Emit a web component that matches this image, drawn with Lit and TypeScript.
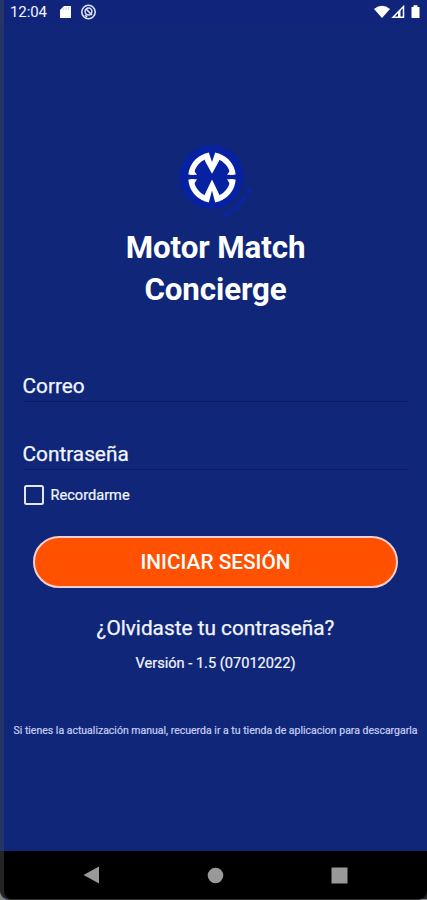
import { LitElement, html, css } from "lit";
import { customElement } from "lit/decorators.js";

@customElement("app-root")
export class AppRoot extends LitElement {
  static styles = css`
    :host { display: block; width: 427px; height: 900px; overflow: hidden; background: #858789;
      font-family: Roboto, "Liberation Sans", sans-serif; color: #f3f5ff; }
    * { box-sizing: border-box; }
    .phone { height: 900px; display: flex; flex-direction: column; background: #102779;
      border-left: 4px solid #253569; border-bottom: 1px solid #333; border-radius: 0 0 9px 9px;
      white-space: nowrap; }
    .status { height: 24px; display: flex; align-items: center; padding: 0 5px 0 6px; background: #10247c; flex: none; }
    .clock { font-size: 15px; letter-spacing: -0.1px; width: 48px; line-height: 24px; }
    .grow { flex: 1; }
    svg { display: block; flex: none; }
    .screen { flex: 1; display: flex; flex-direction: column; align-items: center; }
    .logo { margin: 115px 7px 0 0; }
    h1 { margin: 4px 0 0; font-size: 31.3px; line-height: 42px; font-weight: 700; text-align: center; color: #fff; letter-spacing: -0.1px; }
    .form { width: 100%; padding: 0 18px 0 18.5px; }
    .field { height: 30px; line-height: 29px; font-size: 20.8px; -webkit-text-stroke: 0.25px #f3f5ff; border-bottom: 1px solid #0b1d61; }
    .mail { margin-top: 61px; }
    .pass { margin-top: 38px; }
    .remember { display: flex; align-items: center; margin-top: 15px; height: 20px; font-size: 14.6px; -webkit-text-stroke: 0.2px #f3f5ff; }
    .box { width: 20px; height: 20px; margin-left: 1px; border: 2px solid #e2e6ff; border-radius: 2.5px; margin-right: 7px; }
    .button { width: 365px; height: 52px; margin: 31px 0 0 29px; align-self: flex-start; padding: 0; border: 2px solid #f4cfd3; border-radius: 26px;
      background: #ff5100; color: #fff; font: 500 20.8px/48px Roboto, sans-serif; }
    .forgot { margin-top: 26px; line-height: 28px; font-size: 20.8px; -webkit-text-stroke: 0.25px #f3f5ff; }
    .version { margin-top: 12px; line-height: 18px; font-size: 14.6px; -webkit-text-stroke: 0.2px #f3f5ff; }
    .note { margin-top: 51px; line-height: 16px; font-size: 10.5px; color: #c6cef2; -webkit-text-stroke: 0.2px #c6cef2; }
    .nav { height: 48px; display: flex; align-items: center; background: #000; flex: none;
      border-radius: 0 0 8px 8px; padding-left: 79px; border-left: 0; }
    .home { margin-left: 107px; }
    .recent { margin-left: 107px; }
    .base { flex: none; display: flex; flex-direction: column; margin-left: -4px; border-left: 4px solid #242424; background: #242424; border-radius: 0 0 0 9px; }
  `;

  render() {
    return html`<main class="phone">
      <header class="status">
        <span class="clock">12:04</span>
        <svg width="40" height="18" viewBox="0 0 40 18">
          <path d="M6 3H13V15H2V7Z" fill="#fff"/>
          <path d="M5.7 5v2M8.2 4v3M10.7 4v3" stroke="#bcc5ea" stroke-width=".8"/>
          <g fill="none" stroke="#dce1fa"><circle cx="30.5" cy="9" r="6.7" stroke-width="1.6"/>
          <circle cx="30.5" cy="8.5" r="3.4" stroke-width="1.5"/><path d="M28 6l6 6M27 12l2 2" stroke-width="1.7"/></g>
        </svg>
        <span class="grow"></span>
        <svg width="48" height="18" viewBox="0 0 48 18">
          <path d="M0 6Q8 -.5 16 6L8 15Z" fill="#fff"/>
          <path d="M19 14.300L29.500 3.500V14.300Z" fill="none" stroke="#fff" stroke-width="1.5"/><path d="M24 9V14H26.500V7Z" fill="#fff"/>
          <path d="M37.500 4h2V2.300h4V4h2V15H37.500Z" fill="#fff"/>
        </svg>
      </header>
      <section class="screen">
        <svg class="logo" width="80" height="84" viewBox="172 139 80 84">
          <circle cx="211.500" cy="177" r="32" fill="#0622a3"/>
          <path d="M223 215Q240 210 250 188" fill="none" stroke="#0c259a" stroke-width="5" stroke-dasharray="9 2"/>
          <g fill="none" stroke="#fff" stroke-width="5.500">
            <path d="M191.100 174.700A21.500 21.500 0 0 1 206.500 156.200M217.500 156.200A21.500 21.500 0 0 1 232.900 174.700"/>
            <path d="M191.100 179.300A21.500 21.500 0 0 0 206.500 198.800M217.500 198.800A21.500 21.500 0 0 0 232.900 179.300"/>
          </g>
          <g fill="#fff">
            <path d="M204 154L208.800 152.600L212 162L215.200 152.600L220 154L219 161L212 173.800L205 161Z"/>
            <path d="M204 201L208.800 202.400L212 190.500L215.200 202.400L220 201L219 194L212 179.500L205 194Z"/>
            <path d="M193 169.500L197 174.700H190ZM231 169.500L227 174.700H234ZM190 179.300H197L194 184ZM234 179.300H227L230 184Z"/>
          </g>
        </svg>
        <h1>Motor Match<br>Concierge</h1>
        <div class="form">
          <div class="field mail">Correo</div>
          <div class="field pass">Contraseña</div>
          <label class="remember"><span class="box"></span>Recordarme</label>
        </div>
        <button class="button">INICIAR SESIÓN</button>
        <div class="forgot">¿Olvidaste tu contraseña?</div>
        <div class="version">Versión - 1.5 (07012022)</div>
        <div class="note">Si tienes la actualización manual, recuerda ir a tu tienda de aplicacion para descargarla</div>
      </section>
      <div class="base"><nav class="nav">
        <svg width="17" height="18" viewBox="0 0 17 18"><path d="M.500 9L16 .500V17.500Z" fill="#999"/></svg>
        <svg class="home" width="17" height="17" viewBox="0 0 17 17"><circle cx="8.500" cy="8.500" r="7.800" fill="#999"/></svg>
        <svg class="recent" width="17" height="17" viewBox="0 0 17 17"><path d="M.500 .500h16v16H.500Z" fill="#999"/></svg>
      </nav></div>
    </main>`;
  }
}
